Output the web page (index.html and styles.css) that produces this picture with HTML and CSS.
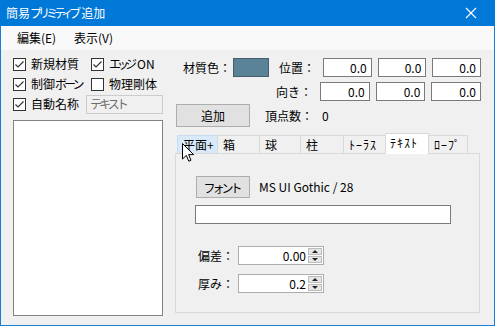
FILE: index.html
```html
<!DOCTYPE html>
<html lang="ja">
<head>
    <meta charset="UTF-8">
    <title>簡易プリミティブ追加</title>
    <link rel="stylesheet" href="styles.css">
</head>
<body>

    <div class="window">
        <div class="titlebar">
            <span class="title">簡易<span class="kana tight">プリミティブ</span>追加</span>
            <svg class="close" width="12" height="12" viewBox="0 0 12 12"><path d="M1 1L11 11M11 1L1 11" stroke="#fff" stroke-width="1.1"/></svg>
        </div>
        <div class="menubar">
            <span class="menu">編集(E)</span>
            <span class="menu">表示(V)</span>
        </div>

        <div class="client">
            <div class="left">
                <div class="checks">
                    <label class="check"><span class="box"><svg width="11" height="11" viewBox="0 0 11 11"><path d="M1.5 5.5L4 8L9.5 2.5" fill="none" stroke="#333" stroke-width="1.2"/></svg></span>新規材質</label>
                    <label class="check"><span class="box"><svg width="11" height="11" viewBox="0 0 11 11"><path d="M1.5 5.5L4 8L9.5 2.5" fill="none" stroke="#333" stroke-width="1.2"/></svg></span><span><span class="kana tight">エッジ</span>ON</span></label>
                    <label class="check"><span class="box"><svg width="11" height="11" viewBox="0 0 11 11"><path d="M1.5 5.5L4 8L9.5 2.5" fill="none" stroke="#333" stroke-width="1.2"/></svg></span><span>制御<span class="kana">ボーン</span></span></label>
                    <label class="check"><span class="box"></span>物理剛体</label>
                </div>
                <div class="name-row">
                    <label class="check"><span class="box"><svg width="11" height="11" viewBox="0 0 11 11"><path d="M1.5 5.5L4 8L9.5 2.5" fill="none" stroke="#333" stroke-width="1.2"/></svg></span>自動名称</label>
                    <div class="textbox disabled"><span class="kana">テキスト</span></div>
                </div>
                <div class="listbox"></div>
            </div>

            <div class="right">
                <div class="prop-row">
                    <span class="lbl-color">材質色：</span>
                    <span class="swatch"></span>
                    <span class="lbl">位置：</span>
                    <div class="textbox num">0.0</div>
                    <div class="textbox num">0.0</div>
                    <div class="textbox num">0.0</div>
                </div>
                <div class="prop-row second">
                    <span class="spacer"></span>
                    <span class="lbl">向き：</span>
                    <div class="textbox num">0.0</div>
                    <div class="textbox num">0.0</div>
                    <div class="textbox num">0.0</div>
                </div>
                <div class="add-row">
                    <button class="btn add">追加</button>
                    <span class="vcount">頂点数：</span>
                    <span>0</span>
                </div>

                <div class="tabctl">
                    <div class="tabs">
                        <span class="tab hover" style="width:41px">平面+</span>
                        <span class="tab" style="width:43px">箱</span>
                        <span class="tab" style="width:42px">球</span>
                        <span class="tab" style="width:44px">柱</span>
                        <span class="tab half" style="width:43px">ﾄｰﾗｽ</span>
                        <span class="tab half active" style="width:44px">ﾃｷｽﾄ</span>
                        <span class="tab half" style="width:40px">ﾛｰﾌﾟ</span>
                    </div>
                    <div class="panel">
                        <div class="font-row">
                            <button class="btn font"><span class="kana">フォント</span></button>
                            <span class="font-name">MS UI Gothic / 28</span>
                        </div>
                        <div class="textbox wide"></div>
                        <div class="spin-row first">
                            <span class="spin-lbl">偏差：</span>
                            <div class="textbox spin"><span class="val">0.00</span><span class="arrows"><span class="up"></span><span class="down"></span></span></div>
                        </div>
                        <div class="spin-row">
                            <span class="spin-lbl">厚み：</span>
                            <div class="textbox spin"><span class="val">0.2</span><span class="arrows"><span class="up"></span><span class="down"></span></span></div>
                        </div>
                    </div>
                    <svg class="cursor" width="13" height="20" viewBox="0 0 13 20"><path d="M0.5 0.5L0.5 16L4.3 12.4L6.8 18.2L9 17.2L6.6 11.6L11.6 11.6Z" fill="#fff" stroke="#000" stroke-width="1"/></svg>
                </div>
            </div>
        </div>
    </div>

</body>
</html>
```

FILE: styles.css
```css
body {
    margin: 0;
    font-family: "Noto Sans CJK JP", "DejaVu Sans", sans-serif;
    font-size: 12px;
    line-height: 14px;
    color: #000;
    background-color: #fff;
}
.window {
    width: 495px;
    height: 326px;
    box-sizing: border-box;
    border: 1px solid #1a7fd4;
    border-top: none;
    background-color: #f0f0f0;
    display: flex;
    flex-direction: column;
}
/* katakana narrowed to the width of the proportional UI font */
.kana {
    letter-spacing: -3px;
    margin-right: 3px;
}
.kana.tight {
    letter-spacing: -4px;
    margin-right: 4px;
}
.titlebar {
    height: 26px;
    background-color: #0078d7;
    color: #fff;
    display: flex;
    align-items: center;
    justify-content: space-between;
    padding: 0 18px 0 6px;
    margin: 0 -1px;
}
.menubar {
    height: 24px;
    background-color: #f9f9f9;
    display: flex;
    align-items: center;
    padding-left: 16px;
}
.menu {
    width: 57px;
}
.client {
    display: flex;
    padding: 4px 0 0 12px;
}
.left {
    width: 150px;
}
.checks {
    display: grid;
    grid-template-columns: 78px auto;
}
.check {
    display: flex;
    align-items: center;
    gap: 5px;
    height: 20px;
    white-space: nowrap;
}
.box {
    width: 13px;
    height: 13px;
    box-sizing: border-box;
    border: 1px solid #333;
    background-color: #fff;
    display: flex;
}
.name-row {
    display: flex;
    align-items: center;
    justify-content: space-between;
    height: 20px;
}
.textbox {
    box-sizing: border-box;
    height: 19px;
    border: 1px solid #7a7a7a;
    background-color: #fff;
    display: flex;
    align-items: center;
}
.textbox.disabled {
    width: 77px;
    background-color: #f0f0f0;
    border-color: #cccccc;
    color: #6d6d6d;
    padding-left: 3px;
}
.listbox {
    margin-top: 6px;
    height: 196px;
    box-sizing: border-box;
    border: 1px solid #828282;
    background-color: #fff;
}
.right {
    margin-left: 13px;
    width: 305px;
}
.prop-row {
    display: flex;
    align-items: center;
    gap: 6px;
    margin-top: 4px;
}
.prop-row.second {
    margin-top: 5px;
}
.lbl-color {
    width: 59px;
    box-sizing: border-box;
    padding-left: 7px;
    margin-right: -6px;
}
.swatch {
    width: 37px;
    height: 19px;
    box-sizing: border-box;
    background-color: #5a8398;
    border: 1px solid #465f6c;
}
.spacer {
    width: 90px;
}
.lbl {
    width: 41px;
    text-align: right;
    padding-right: 2px;
}
.textbox.num {
    width: 50px;
    justify-content: flex-end;
    padding-right: 4px;
}
.add-row {
    display: flex;
    align-items: center;
    margin-top: 3px;
}
.btn {
    font-family: inherit;
    font-size: 12px;
    background-color: #e1e1e1;
    border: 1px solid #adadad;
    padding: 0;
    color: #000;
}
.btn.add {
    width: 74px;
    height: 23px;
}
.vcount {
    margin-left: 15px;
    width: 57px;
}
.tabctl {
    position: relative;
    margin: 6px 0 0 -1px;
    width: 305px;
}
.tabs {
    display: flex;
    align-items: flex-end;
    height: 20px;
    padding-left: 2px;
}
.tab {
    box-sizing: border-box;
    height: 18px;
    border: 1px solid #d9d9d9;
    border-bottom: none;
    margin-right: -1px;
    padding-left: 5px;
    line-height: 17px;
    white-space: nowrap;
    background-color: #f0f0f0;
}
.tab.half {
    letter-spacing: 1px;
}
.tab.hover {
    background-color: #d8eaf9;
    border-color: #c7dcef;
}
.tab.active {
    background-color: #fff;
    position: relative;
    z-index: 1;
    margin-bottom: -1px;
    height: 21px;
    padding-left: 4px;
}
.panel {
    height: 160px;
    box-sizing: border-box;
    border: 1px solid #d9d9d9;
    background-color: #f0f0f0;
    padding: 22px 0 0 20px;
}
.font-row {
    display: flex;
    align-items: center;
}
.btn.font {
    width: 54px;
    height: 22px;
}
.font-name {
    margin-left: 9px;
}
.textbox.wide {
    width: 256px;
    margin: 7px 0 0 -1px;
}
.spin-row {
    display: flex;
    align-items: center;
    margin-top: 9px;
}
.spin-row.first {
    margin-top: 22px;
}
.spin-lbl {
    width: 40px;
    padding-left: 2px;
}
.textbox.spin {
    width: 86px;
    justify-content: flex-end;
    padding: 0 1px 0 0;
    border-color: #adadad;
}
.val {
    margin-right: 2px;
}
.arrows {
    width: 14px;
    height: 15px;
    display: flex;
    flex-direction: column;
    gap: 1px;
}
.up, .down {
    flex: 1;
    background-color: #e6e6e6;
    border: 1px solid #bcbcbc;
    display: flex;
    justify-content: center;
    align-items: center;
}
.up::after {
    content: "";
    border: 3px solid transparent;
    border-bottom: 3px solid #222;
    border-top: none;
}
.down::after {
    content: "";
    border: 3px solid transparent;
    border-top: 3px solid #222;
    border-bottom: none;
}
.cursor {
    position: absolute;
    left: 7px;
    top: 10px;
    z-index: 2;
}
```
